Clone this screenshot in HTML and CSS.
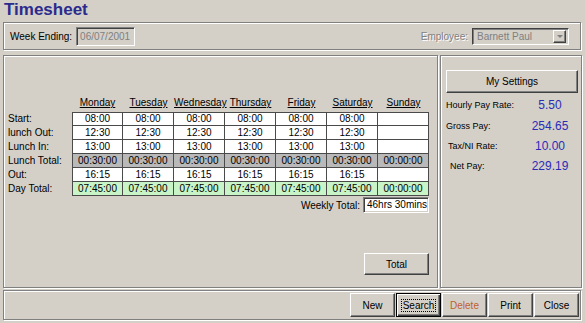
FILE: index.html
```html
<!DOCTYPE html>
<html>
<head>
    <meta charset="UTF-8">
    <title>Timesheet</title>
    <link rel="stylesheet" href="styles.css">
</head>
<body>
<h1 class="title">Timesheet</h1>

<div class="bar week-bar">
    <div class="field">
        <span class="field-label">Week Ending:</span>
        <div class="input input-disabled week-input">06/07/2001</div>
    </div>
    <div class="field">
        <span class="field-label muted">Employee:</span>
        <div class="select">
            <span>Barnett Paul</span>
            <span class="drop"><span class="arrow"></span></span>
        </div>
    </div>
</div>

<div class="main">
    <div class="panel grid-panel">
        <div class="times">
            <div class="head-blank"></div>
            <div class="day">Monday</div>
            <div class="day">Tuesday</div>
            <div class="day">Wednesday</div>
            <div class="day">Thursday</div>
            <div class="day">Friday</div>
            <div class="day">Saturday</div>
            <div class="day">Sunday</div>

            <div class="row-label">Start:</div>
            <div class="cell first-col top">08:00</div>
            <div class="cell top">08:00</div>
            <div class="cell top">08:00</div>
            <div class="cell top">08:00</div>
            <div class="cell top">08:00</div>
            <div class="cell top">08:00</div>
            <div class="cell top"></div>

            <div class="row-label">lunch Out:</div>
            <div class="cell first-col">12:30</div>
            <div class="cell">12:30</div>
            <div class="cell">12:30</div>
            <div class="cell">12:30</div>
            <div class="cell">12:30</div>
            <div class="cell">12:30</div>
            <div class="cell"></div>

            <div class="row-label">Lunch In:</div>
            <div class="cell first-col">13:00</div>
            <div class="cell">13:00</div>
            <div class="cell">13:00</div>
            <div class="cell">13:00</div>
            <div class="cell">13:00</div>
            <div class="cell">13:00</div>
            <div class="cell"></div>

            <div class="row-label">Lunch Total:</div>
            <div class="cell first-col lunch">00:30:00</div>
            <div class="cell lunch">00:30:00</div>
            <div class="cell lunch">00:30:00</div>
            <div class="cell lunch">00:30:00</div>
            <div class="cell lunch">00:30:00</div>
            <div class="cell lunch">00:30:00</div>
            <div class="cell lunch">00:00:00</div>

            <div class="row-label">Out:</div>
            <div class="cell first-col">16:15</div>
            <div class="cell">16:15</div>
            <div class="cell">16:15</div>
            <div class="cell">16:15</div>
            <div class="cell">16:15</div>
            <div class="cell">16:15</div>
            <div class="cell"></div>

            <div class="row-label">Day Total:</div>
            <div class="cell first-col day-total">07:45:00</div>
            <div class="cell day-total">07:45:00</div>
            <div class="cell day-total">07:45:00</div>
            <div class="cell day-total">07:45:00</div>
            <div class="cell day-total">07:45:00</div>
            <div class="cell day-total">07:45:00</div>
            <div class="cell day-total">00:00:00</div>
        </div>

        <div class="weekly">
            <span>Weekly Total:</span>
            <div class="input weekly-input">46hrs 30mins</div>
        </div>

        <div class="total-row">
            <button class="btn btn-total">Total</button>
        </div>
    </div>

    <div class="panel side-panel">
        <button class="btn btn-settings">My Settings</button>
        <div class="pay">
            <span class="pay-label">Hourly Pay Rate:</span>
            <span class="pay-value">5.50</span>
            <span class="pay-label">Gross Pay:</span>
            <span class="pay-value">254.65</span>
            <span class="pay-label indent-2">Tax/NI Rate:</span>
            <span class="pay-value">10.00</span>
            <span class="pay-label indent-4">Net Pay:</span>
            <span class="pay-value">229.19</span>
        </div>
    </div>
</div>

<div class="bar actions">
    <button class="btn btn-action">New</button>
    <button class="btn btn-action btn-default"><span class="focus">Search</span></button>
    <button class="btn btn-action btn-delete">Delete</button>
    <button class="btn btn-action">Print</button>
    <button class="btn btn-action">Close</button>
</div>
</body>
</html>
```

FILE: styles.css
```css
body {
    margin: 0;
    width: 585px;
    height: 323px;
    background: #d4d0c8;
    font-family: "Liberation Sans", Arial, sans-serif;
    font-size: 10px;
    color: #000;
    overflow: hidden;
}

.title {
    margin: 0;
    padding-left: 4px;
    height: 20px;
    line-height: 20px;
    font-size: 17px;
    font-weight: bold;
    color: #2b2a8e;
}

/* etched frames */
.bar,
.panel {
    box-sizing: border-box;
    border: 1px solid #808080;
    box-shadow: inset 1px 1px #fff, 1px 1px #fff;
}

.week-bar {
    margin: 2px 0 0 3px;
    width: 578px;
    height: 28px;
    display: flex;
    align-items: center;
    justify-content: space-between;
    padding: 0 11px 0 6px;
}

.field {
    display: flex;
    align-items: center;
    gap: 4px;
}

.muted {
    color: #808080;
    text-shadow: 1px 1px #fff;
}

.input {
    box-sizing: border-box;
    border: 1px solid;
    border-color: #808080 #fff #fff #808080;
    box-shadow: inset 1px 1px #404040, inset -1px -1px #d4d0c8;
    background: #fff;
    padding: 0 3px;
    white-space: nowrap;
}

.input-disabled {
    background: #d4d0c8;
    color: #808080;
}

.week-input {
    width: 59px;
    height: 19px;
    line-height: 17px;
}

.select {
    box-sizing: border-box;
    width: 97px;
    height: 17px;
    display: flex;
    align-items: center;
    justify-content: space-between;
    padding: 0 2px 0 4px;
    border: 1px solid;
    border-color: #404040 #fff #fff #404040;
    box-shadow: inset 1px 1px #808080;
    color: #808080;
}

.drop {
    box-sizing: border-box;
    width: 13px;
    height: 13px;
    display: flex;
    align-items: center;
    justify-content: center;
    border: 1px solid;
    border-color: #fff #404040 #404040 #fff;
    box-shadow: inset -1px -1px #808080;
}

.arrow {
    width: 0;
    height: 0;
    border-left: 3px solid transparent;
    border-right: 3px solid transparent;
    border-top: 3px solid #808080;
}

.main {
    margin: 5px 0 0 3px;
    display: flex;
    gap: 2px;
    height: 233px;
}

.grid-panel {
    width: 435px;
    padding: 40px 0 0 4px;
}

.times {
    display: grid;
    grid-template-columns: 64px repeat(7, 51px);
    grid-template-rows: 16px repeat(6, 14px);
}

.day {
    text-align: center;
    text-decoration: underline;
    line-height: 14px;
}

.row-label {
    line-height: 14px;
    white-space: nowrap;
}

.cell {
    box-sizing: border-box;
    background: #fff;
    border-right: 1px solid #4a4a4a;
    border-bottom: 1px solid #4a4a4a;
    text-align: center;
    line-height: 13px;
}

.cell.top {
    border-top: 1px solid #4a4a4a;
    line-height: 12px;
}

.cell.first-col {
    border-left: 1px solid #4a4a4a;
}

.cell.lunch {
    background: #b9b9b9;
}

.cell.day-total {
    background: #c8f4c8;
}

.weekly {
    width: 421px;
    margin-top: 1px;
    display: flex;
    justify-content: flex-end;
    align-items: center;
    gap: 3px;
}

.weekly-input {
    width: 66px;
    height: 16px;
    line-height: 14px;
}

.total-row {
    width: 421px;
    margin-top: 40px;
    display: flex;
    justify-content: flex-end;
}

/* classic raised buttons */
.btn {
    box-sizing: border-box;
    background: #d4d0c8;
    border: 1px solid;
    border-color: #fff #404040 #404040 #fff;
    box-shadow: inset -1px -1px #808080;
    font-family: "Liberation Sans", Arial, sans-serif;
    font-size: 10px;
    color: #000;
    padding: 0;
    cursor: pointer;
}

.btn-total {
    width: 65px;
    height: 22px;
}

.side-panel {
    width: 142px;
    padding: 14px 0 0 5px;
}

.btn-settings {
    width: 132px;
    height: 23px;
}

.pay {
    display: grid;
    grid-template-columns: 84px 40px;
    grid-template-rows: 23px 20px 20px 20px;
    align-items: center;
}

.pay-label {
    font-size: 9px;
    white-space: nowrap;
}

.indent-2 {
    padding-left: 2px;
}

.indent-4 {
    padding-left: 4px;
}

.pay-value {
    font-size: 12px;
    color: #2b2bb8;
    text-align: center;
}

.actions {
    margin: 2px 0 0 3px;
    width: 578px;
    height: 30px;
    display: flex;
    justify-content: flex-end;
    align-items: flex-start;
    gap: 1px;
    padding: 2px 1px 0 0;
}

.btn-action {
    width: 45px;
    height: 24px;
}

.btn-default {
    border: 1px solid #000;
    box-shadow: inset 1px 1px #fff, inset -1px -1px #404040, inset -2px -2px #808080;
}

.focus {
    border: 1px dotted #000;
    padding: 0 1px;
}

.btn.btn-delete {
    color: #c0602c;
}
```
